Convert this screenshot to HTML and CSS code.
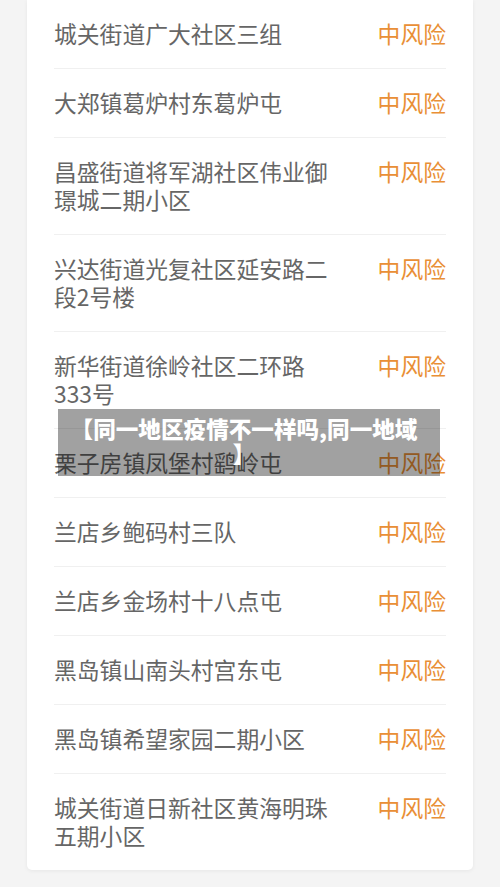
FILE: index.html
```html
<!DOCTYPE html>
<html lang="zh-CN">
<head>
  <meta charset="UTF-8">
  <meta name="viewport" content="width=device-width, initial-scale=1.0">
  <title>中风险地区</title>
  <link rel="stylesheet" href="styles.css">
</head>
<body>
  <!-- 风险地区列表 -->
  <div class="area-list">
    <div class="area-row"><span class="area-name">城关街道广大社区三组</span><span class="area-level">中风险</span></div>
    <div class="area-row"><span class="area-name">大郑镇葛炉村东葛炉屯</span><span class="area-level">中风险</span></div>
    <div class="area-row"><span class="area-name">昌盛街道将军湖社区伟业御璟城二期小区</span><span class="area-level">中风险</span></div>
    <div class="area-row"><span class="area-name">兴达街道光复社区延安路二段2号楼</span><span class="area-level">中风险</span></div>
    <div class="area-row"><span class="area-name">新华街道徐岭社区二环路333号</span><span class="area-level">中风险</span></div>
    <div class="area-row"><span class="area-name">栗子房镇凤堡村鹞岭屯</span><span class="area-level">中风险</span></div>
    <div class="area-row"><span class="area-name">兰店乡鲍码村三队</span><span class="area-level">中风险</span></div>
    <div class="area-row"><span class="area-name">兰店乡金场村十八点屯</span><span class="area-level">中风险</span></div>
    <div class="area-row"><span class="area-name">黑岛镇山南头村宫东屯</span><span class="area-level">中风险</span></div>
    <div class="area-row"><span class="area-name">黑岛镇希望家园二期小区</span><span class="area-level">中风险</span></div>
    <div class="area-row"><span class="area-name">城关街道日新社区黄海明珠五期小区</span><span class="area-level">中风险</span></div>
  </div>

  <!-- 标题浮层 -->
  <div class="caption">【同一地区疫情不一样吗,同一地域<br>】</div>
</body>
</html>
```

FILE: styles.css
```css
body {
  margin: 0;
  padding: 0 27px 16px;
  background: #f4f4f4;
  font-family: 'Noto Sans CJK SC', 'Noto Sans', sans-serif;
}

.area-list {
  background: #fff;
  padding: 0 27px;
  border-radius: 0 0 5px 5px;
  box-shadow: 0 1px 4px rgba(0, 0, 0, 0.06);
}

.area-row {
  display: flex;
  justify-content: space-between;
  align-items: flex-start;
  padding: 20px 0;
  border-bottom: 1px solid #f0f0f0;
  font-size: 22.8px;
  line-height: 28px;
}

.area-row:last-child {
  border-bottom: none;
}

.area-name {
  width: 282px;
  color: #666;
}

.area-level {
  color: #e98f36;
}

.caption {
  position: absolute;
  top: 409px;
  left: 58px;
  width: 372px;
  padding: 7px 10px 10px 0;
  background: rgba(0, 0, 0, 0.37);
  color: #fff;
  font-size: 22.6px;
  font-weight: 900;
  line-height: 25px;
  text-align: center;
}
```
